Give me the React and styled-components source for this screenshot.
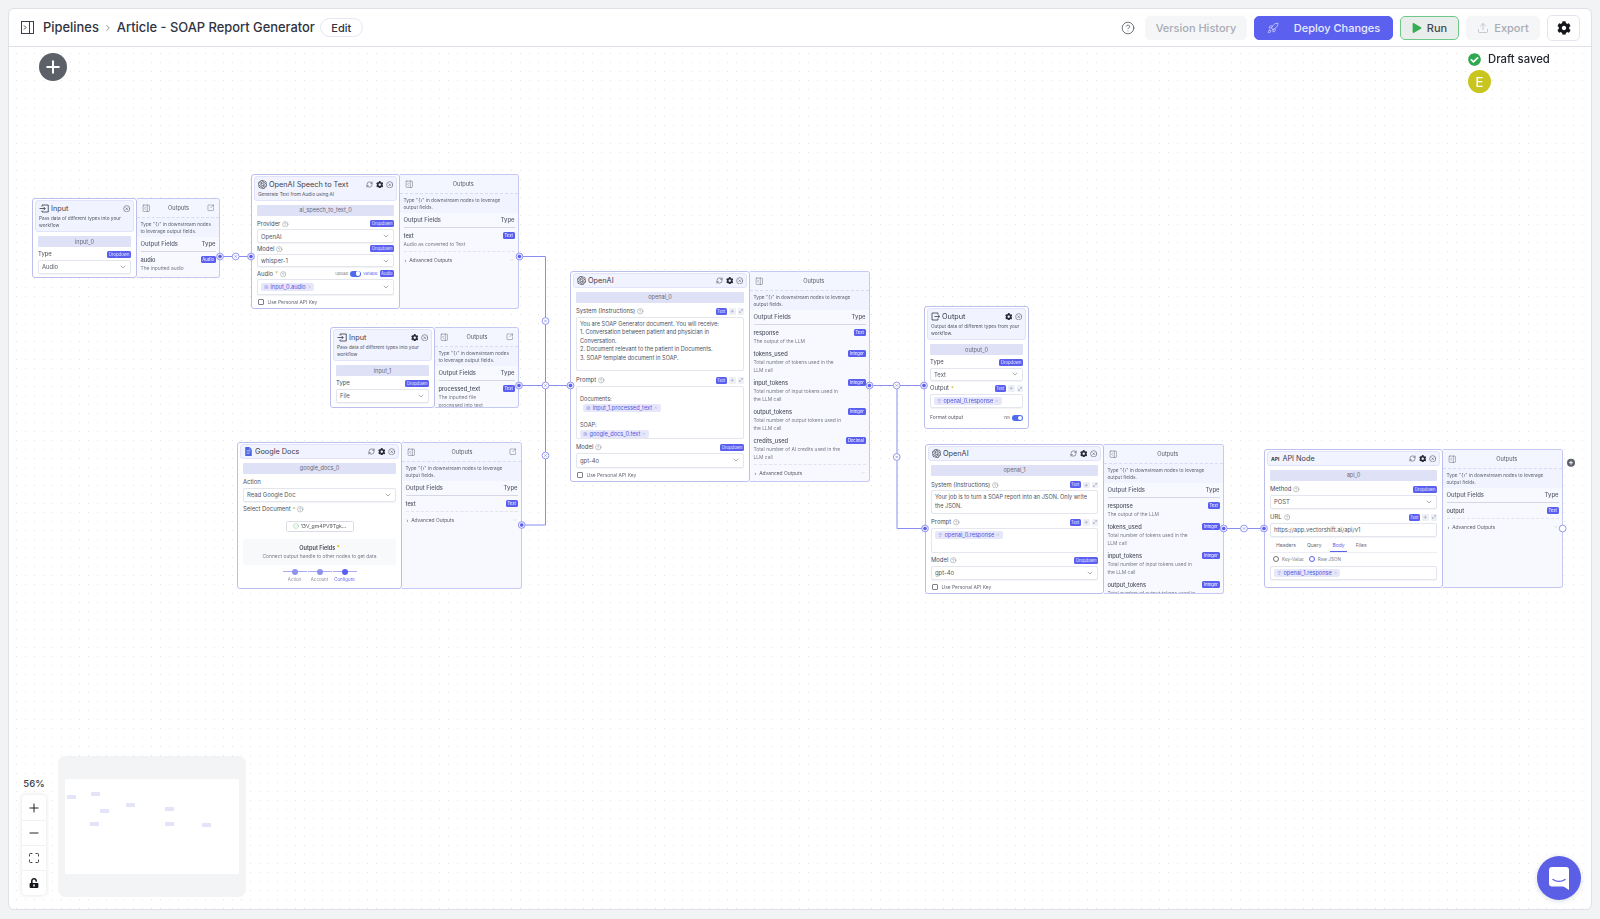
import React from 'react'
import styled, { createGlobalStyle } from 'styled-components'
import {
  ChevronDown, ChevronRight, RefreshCw, CircleX, CircleHelp, PanelRightOpen, SquareArrowOutUpRight,
  Rocket, Upload, Plus, Minus, Maximize, X, Maximize2, FileText, CircleCheck, Type,
} from 'lucide-react'
import { FaCog, FaCheckCircle, FaUnlockAlt, FaPlay } from 'react-icons/fa'
import { SiOpenai, SiGoogledocs } from 'react-icons/si'

const GlobalStyle = createGlobalStyle`
  html, body { margin: 0; padding: 0; background: #f2f3f5; }
  body { font-family: Inter, "Liberation Sans", sans-serif; color: #2f3340; }
  * { box-sizing: border-box; }
`

const Frame = styled.div`
  margin: 8px;
  height: 902px;
  background: #fff;
  border: 1px solid #dfe1e7;
  border-radius: 6px;
  display: flex;
  flex-direction: column;
  overflow: hidden;
`

const Header = styled.header`
  height: 38px;
  flex: none;
  display: flex;
  align-items: center;
  padding: 0 11px 0 12px;
  border-bottom: 1px solid #dfe1ea;
`

const Crumb = styled.span`
  font-size: 12.9px;
  font-weight: 500;
  color: #30343f;
  white-space: nowrap;
`

const CrumbSep = styled.span`
  display: flex;
  margin: 0 4px;
  color: #555;
`

const EditButton = styled.button`
  font: 500 11px Inter, sans-serif;
  color: #30343f;
  width: 43px;
  height: 19px;
  margin-left: 5px;
  padding: 0;
  background: #fff;
  border: 1px solid #e4e6f4;
  border-radius: 10px;
`

const Spacer = styled.div`
  flex: 1;
`

const HelpIcon = styled.span`
  display: flex;
  color: #555a66;
  margin-right: 10px;
`

const TopButton = styled.button`
  font: 500 11px Inter, sans-serif;
  height: ${p => p.$h || 24}px;
  width: ${p => p.$w}px;
  margin-left: ${p => p.$ml ?? 7}px;
  padding: 0;
  display: flex;
  align-items: center;
  justify-content: center;
  gap: ${p => p.$gap ?? 5}px;
  border-radius: 5px;
  color: ${p => p.$color || '#a9acb5'};
  background: ${p => p.$bg || '#f5f6f8'};
  border: 1px solid ${p => p.$line || '#f5f6f8'};
`

const Canvas = styled.main`
  flex: 1;
  position: relative;
  overflow: hidden;
  background-image: radial-gradient(circle, #e2e4e9 0.6px, transparent 0.9px);
  background-size: 9px 9px;
  background-position: 3px 2px;
`

const AddNode = styled.button`
  position: absolute;
  left: 30px;
  top: 6px;
  width: 28px;
  height: 28px;
  padding: 0;
  border: none;
  border-radius: 50%;
  background: #5b6069;
  color: #fff;
  display: flex;
  align-items: center;
  justify-content: center;
`

const DraftStatus = styled.div`
  position: absolute;
  left: 1459px;
  top: 5px;
  display: flex;
  flex-direction: column;
  gap: 4px;
  z-index: 3;
`

const DraftLine = styled.div`
  display: flex;
  align-items: center;
  gap: 7px;
  font-size: 11.3px;
  font-weight: 500;
  color: #23262e;
  height: 14px;
`

const Avatar = styled.div`
  width: 23px;
  height: 23px;
  border-radius: 50%;
  background: #c9c51f;
  color: #fff;
  font-size: 13px;
  font-weight: 500;
  display: flex;
  align-items: center;
  justify-content: center;
`

const Dock = styled.div`
  position: absolute;
  left: 13px;
  bottom: 12px;
  display: flex;
  align-items: flex-end;
  gap: 12px;
`

const ZoomColumn = styled.div`
  width: 24px;
  margin-bottom: 2px;
  display: flex;
  flex-direction: column;
  align-items: center;
  gap: 6px;
`

const ZoomLabel = styled.div`
  font-size: 9.5px;
  font-weight: 500;
  color: #3a3e48;
  white-space: nowrap;
`

const ZoomStack = styled.div`
  width: 24px;
  border-radius: 4px;
  background: #fff;
  box-shadow: 0 0 4px rgba(30, 35, 60, 0.14);
  display: flex;
  flex-direction: column;
`

const ZoomButton = styled.div`
  height: 25px;
  display: flex;
  align-items: center;
  justify-content: center;
  color: #15171c;
  & + & { border-top: 1px solid #f0f1f4; }
`

const MiniMap = styled.div`
  width: 188px;
  height: 141px;
  border-radius: 8px;
  background: #f3f4f6;
  display: flex;
  align-items: center;
  justify-content: center;
`

const ChatBubble = styled.div`
  position: absolute;
  right: 10px;
  bottom: 9px;
  width: 44px;
  height: 44px;
  border-radius: 50%;
  background: #5a5fe6;
  display: flex;
  align-items: center;
  justify-content: center;
  box-shadow: 0 1px 5px rgba(40, 50, 90, 0.18);
`

const EdgeLayer = styled.svg`
  position: absolute;
  left: 0;
  top: 0;
  width: 1582px;
  height: 862px;
  z-index: 2;
  pointer-events: none;
`

/* nodes sit on the canvas at their page coordinates */
const NodeShell = styled.section`
  position: absolute;
  left: ${p => p.$x - 9}px;
  top: ${p => p.$y - 47}px;
  width: ${p => p.$w}px;
  height: ${p => p.$h}px;
  display: flex;
  filter: blur(0.25px);
`

const Card = styled.div`
  width: ${p => p.$w}px;
  flex: none;
  height: 100%;
  background: #fff;
  border: 1px solid #bcbfee;
  border-radius: 3px;
  padding: 1px 2px 2px;
  display: flex;
  flex-direction: column;
`

const CardHead = styled.div`
  background: #f1f3ff;
  border: 1px solid #e0e3fb;
  border-radius: 3px;
  padding: ${p => (p.$tall ? '1px 3px 2px' : '0 3px')};
  min-height: 15px;
  flex: none;
`

const HeadRow = styled.div`
  height: 13px;
  display: flex;
  align-items: center;
  gap: 2px;
  color: #343845;
`

const HeadTitle = styled.div`
  flex: 1;
  font-size: 7.3px;
  font-weight: 400;
  white-space: nowrap;
  color: #3c404c;
`

const HeadDesc = styled.div`
  font-size: 4.7px;
  line-height: 7.2px;
  color: #505462;
`

const HeadTools = styled.div`
  display: flex;
  align-items: center;
  gap: 2.5px;
  color: #2a2d36;
`

const ApiGlyph = styled.span`
  font-size: 5px;
  font-weight: 700;
  color: #343845;
  margin-right: 1px;
`

const Body = styled.div`
  margin: 4px 3px 0;
  display: flex;
  flex-direction: column;
  min-height: 0;
`

const NameBar = styled.div`
  height: 10.5px;
  background: #dfe1f6;
  border-radius: 1px;
  display: flex;
  align-items: center;
  justify-content: center;
  font-size: 5.6px;
  color: #686c7a;
  flex: none;
`

const LabelRow = styled.div`
  height: ${p => p.$h || 11}px;
  padding-bottom: 2px;
  display: flex;
  align-items: flex-end;
  gap: 2px;
  flex: none;
`

const Label = styled.span`
  font-size: 5.9px;
  line-height: 7.5px;
  color: #4a4e5a;
  white-space: nowrap;
`

const SmallLabel = styled.span`
  font-size: 5px;
  line-height: 7.5px;
  color: #5a5e6a;
  white-space: nowrap;
`

const Push = styled.div`
  flex: 1;
`

const Star = styled.span`
  color: #c9b400;
  font-size: 5.5px;
`

const Badge = styled.span`
  height: 7px;
  padding: 0 1.5px;
  border-radius: 1.5px;
  background: #5a5ff0;
  color: #e8e9ff;
  font-size: 4.2px;
  display: inline-flex;
  align-items: center;
  flex: none;
`

const MiniTool = styled.span`
  width: 6.5px;
  height: 6.5px;
  border-radius: 1px;
  background: #eef0f8;
  color: #5d6170;
  display: inline-flex;
  align-items: center;
  justify-content: center;
  flex: none;
`

const Select = styled.div`
  height: ${p => p.$h || 14}px;
  border: 1px solid #e4e6ee;
  border-radius: 2px;
  padding: 0 3px;
  display: flex;
  align-items: center;
  gap: 3px;
  font-size: 5.9px;
  color: #555966;
  background: #fff;
  box-shadow: 0 0.5px 1px rgba(40, 44, 70, 0.06);
  flex: none;
`

const TextBox = styled.div`
  height: ${p => p.$h}px;
  border: 1px solid #e4e6ee;
  border-radius: 2px;
  padding: ${p => p.$pt ?? 2}px 3px 0;
  font-size: 5.6px;
  line-height: 8.5px;
  color: #4f5360;
  background: #fff;
  flex: none;
  overflow: hidden;
`

const Chip = styled.span`
  display: inline-flex;
  align-items: center;
  gap: 2px;
  height: 8.5px;
  padding: 0 3px;
  border-radius: 2px;
  background: #e6e7fb;
  color: #5054dd;
  font-size: 5.6px;
  line-height: 8.5px;
  white-space: nowrap;
`

const CheckRow = styled.div`
  margin-top: 3px;
  height: 9px;
  display: flex;
  align-items: center;
  gap: 4px;
  padding-left: 1px;
  font-size: 4.9px;
  color: #6a6e7a;
`

const CheckBox = styled.span`
  width: 5.5px;
  height: 5.5px;
  border: 0.7px solid #7d808c;
  border-radius: 1px;
`

const Toggle = styled.span`
  width: 11px;
  height: 6px;
  border-radius: 3px;
  background: #4f6bed;
  display: inline-flex;
  justify-content: flex-end;
  align-items: center;
  padding: 0 0.7px;
  margin-bottom: 0.5px;
  &::after {
    content: '';
    width: 4.6px;
    height: 4.6px;
    border-radius: 50%;
    background: #fff;
  }
`

const TinyText = styled.span`
  font-size: 3.8px;
  line-height: 7px;
  color: ${p => p.$color || '#777'};
`

const DocButton = styled.div`
  align-self: center;
  width: 68px;
  height: 11px;
  margin-top: 6px;
  border: 1px solid #dadce4;
  border-radius: 1.5px;
  display: flex;
  align-items: center;
  justify-content: center;
  gap: 2px;
  font-size: 5.2px;
  color: #555;
`

const InfoBox = styled.div`
  height: 26px;
  margin-top: 7px;
  border-radius: 3px;
  background: #f8f9fb;
  display: flex;
  flex-direction: column;
  align-items: center;
  justify-content: center;
  gap: 2px;
  font-size: 4.9px;
  color: #787c88;
  & > b { font-size: 5.6px; font-weight: 600; color: #474b57; }
`

const Stepper = styled.div`
  display: flex;
  justify-content: center;
  gap: 1px;
  margin-top: 4px;
`

const Step = styled.div`
  width: 24px;
  display: flex;
  flex-direction: column;
  align-items: center;
  gap: 2px;
  font-size: 4.4px;
  color: ${p => (p.$on ? '#6366f1' : '#8a8e98')};
`

const StepDot = styled.div`
  width: 100%;
  height: 6px;
  display: flex;
  justify-content: center;
  align-items: center;
  background: linear-gradient(#a9abf4, #a9abf4) center / 100% 1px no-repeat;
  &::after {
    content: '';
    width: 6px;
    height: 6px;
    border-radius: 50%;
    background: ${p => (p.$on ? '#5a5ff0' : '#8f92ee')};
  }
`

const Tabs = styled.div`
  height: 14px;
  margin-top: 2px;
  display: flex;
  align-items: center;
  gap: 7px;
  padding-left: 4px;
  border-bottom: 1px solid #eceef4;
  font-size: 5px;
  color: #666a76;
`

const Tab = styled.span`
  height: 100%;
  display: flex;
  align-items: center;
  padding: 0 2px;
  color: ${p => (p.$on ? '#5a5ff0' : 'inherit')};
  border-bottom: ${p => (p.$on ? '1px solid #5a5ff0' : 'none')};
`

const RadioRow = styled.div`
  height: 13px;
  display: flex;
  align-items: center;
  gap: 3px;
  padding-left: 3px;
  font-size: 4.6px;
  color: #777b87;
`

const Radio = styled.span`
  width: 6px;
  height: 6px;
  border-radius: 50%;
  border: ${p => (p.$on ? '1.6px solid #5a5ff0' : '0.7px solid #777')};
  margin-left: ${p => (p.$on ? '2px' : '0')};
`

const Panel = styled.div`
  flex: 1;
  min-width: 0;
  height: 100%;
  overflow: hidden;
  background: #f8f9fe;
  border: 1px solid #c6c9f4;
  border-left: none;
  border-radius: 0 3px 3px 0;
  display: flex;
  flex-direction: column;
`

const PanelHead = styled.div`
  height: 19px;
  flex: none;
  display: flex;
  align-items: center;
  padding: 0 5px;
  background: #f3f5ff;
  border-bottom: 1px dashed #d8dbf8;
  color: #3e424e;
  font-size: 5.6px;
`

const PanelTitle = styled.span`
  flex: 1;
  text-align: center;
  color: #565a66;
`

const PanelDesc = styled.div`
  height: 19px;
  flex: none;
  padding: 3px 3.5px 0;
  background: #f1f3ff;
  font-size: 4.75px;
  line-height: 7.1px;
  color: #595d6a;
  overflow: hidden;
`

const PanelBody = styled.div`
  padding: 0 3.5px;
  display: flex;
  flex-direction: column;
`

const FieldsHead = styled.div`
  height: 14.5px;
  flex: none;
  display: flex;
  align-items: center;
  justify-content: space-between;
  border-bottom: 1px solid #d5d7e4;
  font-size: 5.9px;
  font-weight: 500;
  color: #5c6070;
`

const OutField = styled.div`
  padding-top: 4.4px;
`

const OutName = styled.div`
  display: flex;
  align-items: center;
  justify-content: space-between;
  height: 8px;
  font-size: 5.7px;
  font-weight: 500;
  color: #4c505d;
`

const OutDesc = styled.div`
  width: 80%;
  font-size: 4.9px;
  line-height: 8.3px;
  color: #787c88;
`

const Advanced = styled.div`
  height: 17px;
  display: flex;
  align-items: center;
  justify-content: space-between;
  margin-top: 3px;
  padding: 0 1px;
  border-top: 1px dashed #e2e4ee;
  font-size: 4.9px;
  color: #585c68;
`

function Tools({ sync, gear = true }) {
  return (
    <HeadTools>
      {sync && <RefreshCw size={7} strokeWidth={1.6} />}
      {gear && <FaCog size={7.5} />}
      <CircleX size={7.5} strokeWidth={1.4} />
    </HeadTools>
  )
}

const Hint = () => <CircleHelp size={6.5} strokeWidth={1.3} color="#5f636e" />

const Chevron = () => (
  <>
    <Push />
    <ChevronDown size={8} strokeWidth={1.3} color="#444" />
  </>
)

const ChipClose = () => <X size={3.5} strokeWidth={1.5} color="#7a7d90" />

function InputGlyph() {
  return (
    <svg width="10" height="9" viewBox="0 0 20 18" fill="none" stroke="#343845" strokeWidth="1.6">
      <path d="M6 5V2h12.5v14H6v-3" />
      <path d="M1 9h11M9 5.5 12.5 9 9 12.5" />
    </svg>
  )
}

function OutputGlyph() {
  return (
    <svg width="9" height="9" viewBox="0 0 18 18" fill="none" stroke="#343845" strokeWidth="1.6">
      <path d="M14 5V2H2v14h12v-3" />
      <path d="M7 9h10M14 5.5 17.5 9 14 12.5" />
    </svg>
  )
}

function TypeRow({ tools, badge = 'Text' }) {
  return (
    <>
      <Badge>{badge}</Badge>
      {tools && <MiniTool><Plus size={4.5} strokeWidth={1.5} /></MiniTool>}
      {tools && <MiniTool><Maximize2 size={4} strokeWidth={1.5} /></MiniTool>}
    </>
  )
}

function OutputsHeader({ popout }) {
  return (
    <PanelHead>
      <PanelRightOpen size={8.5} strokeWidth={1.1} />
      <PanelTitle>Outputs</PanelTitle>
      {popout && <SquareArrowOutUpRight size={7.5} strokeWidth={1.2} />}
    </PanelHead>
  )
}

function OutputsPanel({ popout, fields, advanced }) {
  return (
    <Panel>
      <OutputsHeader popout={popout} />
      <PanelDesc>Type "{'{}'}" in downstream nodes to leverage output fields.</PanelDesc>
      <PanelBody>
        <FieldsHead><span>Output Fields</span><span>Type</span></FieldsHead>
        {fields.map(f => (
          <OutField key={f.name}>
            <OutName><span>{f.name}</span><Badge>{f.type}</Badge></OutName>
            {f.desc && <OutDesc>{f.desc}</OutDesc>}
          </OutField>
        ))}
        {advanced && (
          <Advanced>
            <span>› &nbsp;Advanced Outputs</span>
            <ChevronDown size={4} strokeWidth={1} />
          </Advanced>
        )}
      </PanelBody>
    </Panel>
  )
}

const llmFields = [
  { name: 'response', type: 'Text', desc: 'The output of the LLM' },
  { name: 'tokens_used', type: 'Integer', desc: 'Total number of tokens used in the LLM call' },
  { name: 'input_tokens', type: 'Integer', desc: 'Total number of input tokens used in the LLM call' },
  { name: 'output_tokens', type: 'Integer', desc: 'Total number of output tokens used in the LLM call' },
]

function Input0() {
  return (
    <NodeShell $x={32} $y={198} $w={188} $h={80}>
      <Card $w={105}>
        <CardHead $tall>
          <HeadRow>
            <InputGlyph />
            <HeadTitle>Input</HeadTitle>
            <Tools gear={false} />
          </HeadRow>
          <HeadDesc>Pass data of different types into your workflow</HeadDesc>
        </CardHead>
        <Body>
          <NameBar>input_0</NameBar>
          <LabelRow $h={13}>
            <Label>Type</Label><Push /><Badge>Dropdown</Badge>
          </LabelRow>
          <Select>Audio<Chevron /></Select>
        </Body>
      </Card>
      <OutputsPanel popout fields={[{ name: 'audio', type: 'Audio', desc: 'The inputted audio' }]} />
    </NodeShell>
  )
}

function SpeechNode() {
  return (
    <NodeShell $x={251} $y={174} $w={268} $h={135}>
      <Card $w={149}>
        <CardHead $tall>
          <HeadRow>
            <SiOpenai size={9} />
            <HeadTitle>OpenAI Speech to Text</HeadTitle>
            <Tools sync />
          </HeadRow>
          <HeadDesc>Generate Text from Audio using AI</HeadDesc>
        </CardHead>
        <Body>
          <NameBar>ai_speech_to_text_0</NameBar>
          <LabelRow $h={13.5}>
            <Label>Provider</Label><Hint /><Push /><Badge>Dropdown</Badge>
          </LabelRow>
          <Select>OpenAI<Chevron /></Select>
          <LabelRow>
            <Label>Model</Label><Hint /><Push /><Badge>Dropdown</Badge>
          </LabelRow>
          <Select $h={13}>whisper-1<Chevron /></Select>
          <LabelRow $h={12}>
            <Label>Audio</Label><Star>*</Star><Hint /><Push />
            <TinyText>Upload</TinyText><Toggle /><TinyText $color="#5a5ff0">Variable</TinyText>
            <Badge>Audio</Badge>
          </LabelRow>
          <Select $h={16}>
            <Chip><FileText size={4.5} strokeWidth={1.2} />input_0.audio <ChipClose /></Chip>
            <Chevron />
          </Select>
          <CheckRow><CheckBox />Use Personal API Key</CheckRow>
        </Body>
      </Card>
      <OutputsPanel
        fields={[{ name: 'text', type: 'Text', desc: 'Audio as converted to Text' }]}
        advanced
      />
    </NodeShell>
  )
}

function Input1() {
  return (
    <NodeShell $x={330} $y={327} $w={189} $h={81}>
      <Card $w={105}>
        <CardHead $tall>
          <HeadRow>
            <InputGlyph />
            <HeadTitle>Input</HeadTitle>
            <Tools />
          </HeadRow>
          <HeadDesc>Pass data of different types into your workflow</HeadDesc>
        </CardHead>
        <Body>
          <NameBar>input_1</NameBar>
          <LabelRow $h={13}>
            <Label>Type</Label><Push /><Badge>Dropdown</Badge>
          </LabelRow>
          <Select>File<Chevron /></Select>
        </Body>
      </Card>
      <OutputsPanel
        popout
        fields={[{ name: 'processed_text', type: 'Text', desc: 'The inputted file processed into text' }]}
      />
    </NodeShell>
  )
}

function GoogleDocs() {
  return (
    <NodeShell $x={237} $y={442} $w={285} $h={147}>
      <Card $w={165}>
        <CardHead>
          <HeadRow>
            <SiGoogledocs size={9} color="#4a63e0" />
            <HeadTitle>Google Docs</HeadTitle>
            <Tools sync />
          </HeadRow>
        </CardHead>
        <Body>
          <NameBar>google_docs_0</NameBar>
          <LabelRow $h={14}><Label>Action</Label></LabelRow>
          <Select>Read Google Doc<Chevron /></Select>
          <LabelRow $h={13}>
            <Label>Select Document</Label><Star>*</Star><Hint />
          </LabelRow>
          <DocButton><CircleCheck size={6} strokeWidth={1.2} color="#3aa655" />13V_gm4PV9Tgk...</DocButton>
          <InfoBox>
            <b>Output Fields <Star>*</Star></b>
            Connect output handle to other nodes to get data
          </InfoBox>
          <Stepper>
            <Step><StepDot />Action</Step>
            <Step><StepDot />Account</Step>
            <Step $on><StepDot $on />Configure</Step>
          </Stepper>
        </Body>
      </Card>
      <OutputsPanel popout fields={[{ name: 'text', type: 'Text' }]} advanced />
    </NodeShell>
  )
}

function OpenAI0() {
  return (
    <NodeShell $x={570} $y={271} $w={300} $h={211}>
      <Card $w={180}>
        <CardHead>
          <HeadRow>
            <SiOpenai size={9} />
            <HeadTitle>OpenAI</HeadTitle>
            <Tools sync />
          </HeadRow>
        </CardHead>
        <Body>
          <NameBar>openai_0</NameBar>
          <LabelRow $h={14}>
            <Label>System (Instructions)</Label><Hint /><Push /><TypeRow tools />
          </LabelRow>
          <TextBox $h={54}>
            You are SOAP Generator document. You will receive:<br />
            1. Conversation between patient and physician in Conversation.<br />
            2. Document relevant to the patient in Documents.<br />
            3. SOAP template document in SOAP.
          </TextBox>
          <LabelRow $h={15}>
            <Label>Prompt</Label><Hint /><Push /><TypeRow tools />
          </LabelRow>
          <TextBox $h={53} $pt={0}>
            <br />
            Documents:<br />
            &nbsp;&nbsp;<Chip><FileText size={4.5} strokeWidth={1.2} />input_1.processed_text <ChipClose /></Chip><br />
            <br />
            SOAP:<br />
            <Chip><FileText size={4.5} strokeWidth={1.2} />google_docs_0.text <ChipClose /></Chip>
          </TextBox>
          <LabelRow $h={14}>
            <Label>Model</Label><Hint /><Push /><Badge>Dropdown</Badge>
          </LabelRow>
          <Select $h={15}>gpt-4o<Chevron /></Select>
          <CheckRow><CheckBox />Use Personal API Key</CheckRow>
        </Body>
      </Card>
      <OutputsPanel
        fields={[...llmFields, { name: 'credits_used', type: 'Decimal', desc: 'Total number of AI credits used in the LLM call' }]}
        advanced
      />
    </NodeShell>
  )
}

function OutputNode() {
  return (
    <NodeShell $x={924} $y={306} $w={105} $h={123}>
      <Card $w={105}>
        <CardHead $tall>
          <HeadRow>
            <OutputGlyph />
            <HeadTitle>Output</HeadTitle>
            <Tools />
          </HeadRow>
          <HeadDesc>Output data of different types from your workflow.</HeadDesc>
        </CardHead>
        <Body>
          <NameBar>output_0</NameBar>
          <LabelRow $h={13}>
            <Label>Type</Label><Push /><Badge>Dropdown</Badge>
          </LabelRow>
          <Select $h={13}>Text<Chevron /></Select>
          <LabelRow $h={13}>
            <Label>Output</Label><Star>*</Star><Push /><TypeRow tools />
          </LabelRow>
          <Select $h={14.5}>
            <Chip><Type size={4.5} strokeWidth={1.2} />openai_0.response <ChipClose /></Chip>
          </Select>
          <LabelRow $h={15}>
            <SmallLabel>Format output</SmallLabel>
            <Push />
            <TinyText $color="#666">Yes</TinyText>
            <Toggle />
          </LabelRow>
        </Body>
      </Card>
    </NodeShell>
  )
}

function OpenAI1() {
  return (
    <NodeShell $x={925} $y={444} $w={299} $h={150}>
      <Card $w={179}>
        <CardHead>
          <HeadRow>
            <SiOpenai size={9} />
            <HeadTitle>OpenAI</HeadTitle>
            <Tools sync />
          </HeadRow>
        </CardHead>
        <Body>
          <NameBar>openai_1</NameBar>
          <LabelRow $h={14.5}>
            <Label>System (Instructions)</Label><Hint /><Push /><TypeRow tools />
          </LabelRow>
          <TextBox $h={24}>
            Your job is to turn a SOAP report into an JSON. Only write the JSON.
          </TextBox>
          <LabelRow $h={13.5}>
            <Label>Prompt</Label><Hint /><Push /><TypeRow tools />
          </LabelRow>
          <TextBox $h={25}>
            <Chip><Type size={4.5} strokeWidth={1.2} />openai_0.response <ChipClose /></Chip>
          </TextBox>
          <LabelRow $h={13}>
            <Label>Model</Label><Hint /><Push /><Badge>Dropdown</Badge>
          </LabelRow>
          <Select $h={14.5}>gpt-4o<Chevron /></Select>
          <CheckRow><CheckBox />Use Personal API Key</CheckRow>
        </Body>
      </Card>
      <OutputsPanel fields={llmFields} />
    </NodeShell>
  )
}

function ApiNode() {
  return (
    <NodeShell $x={1264} $y={449} $w={299} $h={139}>
      <Card $w={179}>
        <CardHead>
          <HeadRow>
            <ApiGlyph>API</ApiGlyph>
            <HeadTitle>API Node</HeadTitle>
            <Tools sync />
          </HeadRow>
        </CardHead>
        <Body>
          <NameBar>api_0</NameBar>
          <LabelRow $h={14}>
            <Label>Method</Label><Hint /><Push /><Badge>Dropdown</Badge>
          </LabelRow>
          <Select>POST<Chevron /></Select>
          <LabelRow $h={14}>
            <Label>URL</Label><Hint /><Push /><TypeRow tools />
          </LabelRow>
          <Select>https://app.vectorshift.ai/api/v1</Select>
          <Tabs>
            <Tab>Headers</Tab><Tab>Query</Tab><Tab $on>Body</Tab><Tab>Files</Tab>
          </Tabs>
          <RadioRow>
            <Radio />Key-Value<Radio $on />Raw JSON
          </RadioRow>
          <Select $h={14.5}>
            <Chip><Type size={4.5} strokeWidth={1.2} />openai_1.response <ChipClose /></Chip>
          </Select>
        </Body>
      </Card>
      <OutputsPanel fields={[{ name: 'output', type: 'Text' }]} advanced />
    </NodeShell>
  )
}

const EDGE = '#8a8df0'

function Handle({ x, y, hollow }) {
  return (
    <g>
      <circle cx={x} cy={y} r="3.4" fill={hollow ? '#fff' : '#e8e9fd'} stroke={EDGE} strokeWidth="0.9" />
      {!hollow && <circle cx={x} cy={y} r="1.8" fill="#5a5ff0" />}
    </g>
  )
}

function Cross({ x, y }) {
  return (
    <g>
      <circle cx={x} cy={y} r="3.4" fill="#fff" stroke={EDGE} strokeWidth="0.9" />
      <path d={`M${x - 1.2} ${y - 1.2}l2.4 2.4M${x + 1.2} ${y - 1.2}l-2.4 2.4`} stroke={EDGE} strokeWidth="0.7" />
    </g>
  )
}

function Edges() {
  return (
    <EdgeLayer viewBox="0 0 1582 862">
      <g transform="translate(-9 -47)">
        <g fill="none" stroke={EDGE} strokeWidth="1">
          <path d="M220 256.5H251" />
          <path d="M519.5 256.5H545.5V385.5" />
          <path d="M519 385.5H570.5" />
          <path d="M521.7 525H545.5V385.5" />
          <path d="M869.5 385.5H924" />
          <path d="M897 385.5V528.5H925" />
          <path d="M1223.7 528.5H1264" />
        </g>
        <Handle x={220} y={256.5} />
        <Cross x={235.7} y={256.5} />
        <Handle x={251} y={256.5} />
        <Handle x={519.5} y={256.5} />
        <Cross x={545.5} y={321} />
        <Handle x={519} y={385.5} />
        <Cross x={545.5} y={385.5} />
        <Handle x={570.5} y={385.5} />
        <Handle x={521.7} y={525} />
        <Cross x={545.5} y={455.5} />
        <Handle x={869.5} y={385.5} />
        <Cross x={896.7} y={385.5} />
        <Handle x={924} y={385.5} />
        <Cross x={896.7} y={457} />
        <Handle x={925} y={528.5} />
        <Handle x={1223.7} y={528.5} />
        <Cross x={1244} y={528.5} />
        <Handle x={1264} y={528.5} />
        <Handle x={1562.7} y={528.5} hollow />
        <circle cx={1571} cy={462.7} r="4" fill="#5b6069" />
        <path d="M1569 462.7h4M1571 460.7v4" stroke="#fff" strokeWidth="0.9" />
      </g>
    </EdgeLayer>
  )
}

const miniNodes = [
  [2, 16], [26, 13], [35, 30], [61, 24], [100, 28], [25, 43], [100, 43], [137, 44],
]

function MiniMapView() {
  return (
    <MiniMap>
      <svg width="174" height="95" viewBox="0 0 174 95">
        <rect width="174" height="95" fill="#fff" />
        {miniNodes.map(([x, y]) => (
          <rect key={`${x}-${y}`} x={x} y={y} width="9" height="4" rx="0.5" fill="#e3e4f8" />
        ))}
      </svg>
    </MiniMap>
  )
}

function SidebarGlyph() {
  return (
    <svg width="13" height="13" viewBox="0 0 13 13" fill="none" stroke="#3a3e48" strokeWidth="1">
      <rect x="0.5" y="0.5" width="12" height="12" />
      <path d="M8.5 0.5v12M3 4.5l2 2-2 2" />
    </svg>
  )
}

const SidebarToggle = styled.span`
  display: flex;
  margin-right: 9px;
`

export default function App() {
  return (
    <>
      <GlobalStyle />
      <Frame>
        <Header>
          <SidebarToggle><SidebarGlyph /></SidebarToggle>
          <Crumb>Pipelines</Crumb>
          <CrumbSep><ChevronRight size={10} strokeWidth={1.6} /></CrumbSep>
          <Crumb>Article - SOAP Report Generator</Crumb>
          <EditButton>Edit</EditButton>
          <Spacer />
          <HelpIcon><CircleHelp size={14} strokeWidth={1.4} /></HelpIcon>
          <TopButton $w={102} $ml={0}>Version History</TopButton>
          <TopButton $w={139} $bg="#5b61ee" $line="#5b61ee" $color="#e9eaff" $gap={15}>
            <Rocket size={12} strokeWidth={1.3} />Deploy Changes
          </TopButton>
          <TopButton $w={59} $bg="#e9edec" $line="#6fc88a" $color="#444a50">
            <FaPlay size={10} color="#35ad55" />Run
          </TopButton>
          <TopButton $w={74}>
            <Upload size={12} strokeWidth={1.2} />Export
          </TopButton>
          <TopButton $w={33} $h={26} $bg="#fff" $line="#e4e6eb" $color="#15171c">
            <FaCog size={14} />
          </TopButton>
        </Header>
        <Canvas>
          <AddNode><Plus size={20} strokeWidth={2.4} /></AddNode>
          <DraftStatus>
            <DraftLine><FaCheckCircle size={13} color="#2fa84f" />Draft saved</DraftLine>
            <Avatar>E</Avatar>
          </DraftStatus>
          <Input0 />
          <SpeechNode />
          <Input1 />
          <GoogleDocs />
          <OpenAI0 />
          <OutputNode />
          <OpenAI1 />
          <ApiNode />
          <Edges />
          <Dock>
            <ZoomColumn>
              <ZoomLabel>56%</ZoomLabel>
              <ZoomStack>
                <ZoomButton><Plus size={14} strokeWidth={1.6} /></ZoomButton>
                <ZoomButton><Minus size={14} strokeWidth={1.6} /></ZoomButton>
                <ZoomButton><Maximize size={12} strokeWidth={1.6} /></ZoomButton>
                <ZoomButton><FaUnlockAlt size={10} /></ZoomButton>
              </ZoomStack>
            </ZoomColumn>
            <MiniMapView />
          </Dock>
          <ChatBubble>
            <svg width="20" height="23" viewBox="0 0 20 23">
              <path d="M3 0h14a3 3 0 0 1 3 3v20l-5.5-3.4H3a3 3 0 0 1-3-3V3a3 3 0 0 1 3-3Z" fill="#fff" />
              <path d="M4 12.5c3.5 2.4 8.5 2.4 12 0" fill="none" stroke="#5a5fe6" strokeWidth="1.4" strokeLinecap="round" />
            </svg>
          </ChatBubble>
        </Canvas>
      </Frame>
    </>
  )
}
